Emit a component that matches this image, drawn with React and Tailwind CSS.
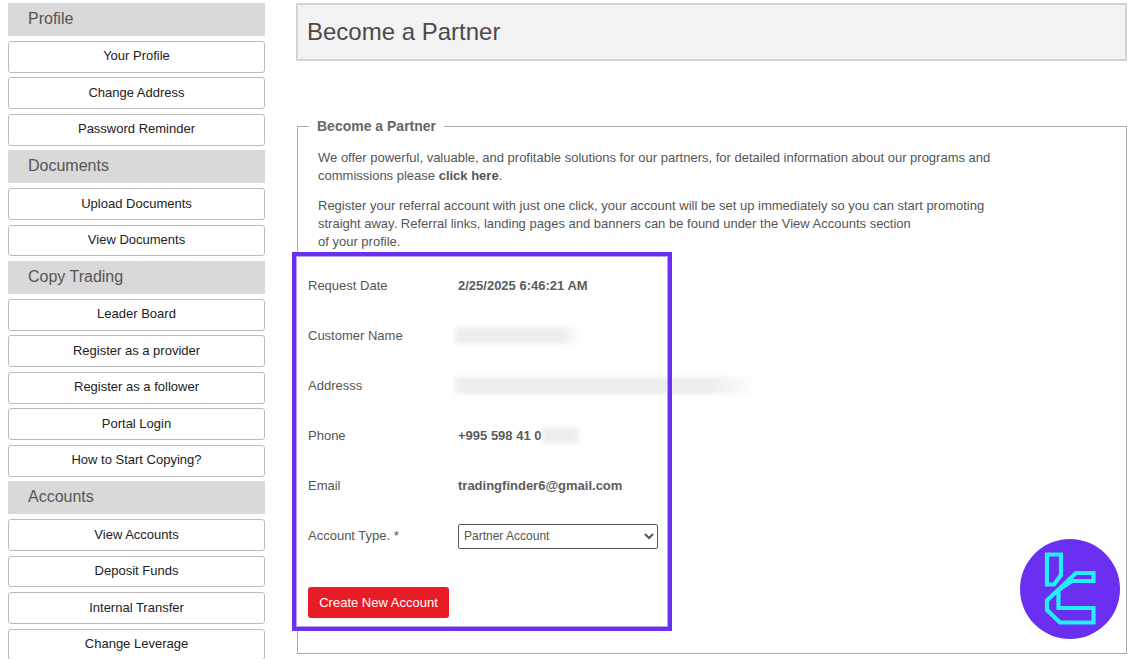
const sidebar = [
  { title: 'Profile', links: ['Your Profile', 'Change Address', 'Password Reminder'] },
  { title: 'Documents', links: ['Upload Documents', 'View Documents'] },
  { title: 'Copy Trading', links: ['Leader Board', 'Register as a provider', 'Register as a follower', 'Portal Login', 'How to Start Copying?'] },
  { title: 'Accounts', links: ['View Accounts', 'Deposit Funds', 'Internal Transfer', 'Change Leverage'] },
];

function Logo() {
  return (
    <svg viewBox="0 0 100 100" className="absolute left-[1020px] top-[539px] w-[100px] h-[100px]">
      <circle cx="50" cy="50" r="50" fill="#6a2ff0" />
      <g fill="none" stroke="#22eeff" strokeWidth="4.2">
        <path d="M27 15.5 H41 V36 L34 45.5 H27 Z" />
        <path d="M73.5 34 H56 L27 61.5 V71 L40 83.5 H73.5 V69 H38.5 V51 L52 42 H73.5 Z" />
      </g>
    </svg>
  );
}

function Row({ label, children }) {
  return (
    <div className="flex items-center h-[50px]">
      <div className="w-[150px] shrink-0">{label}</div>
      <div className="font-bold text-[#5c5c5c]">{children}</div>
    </div>
  );
}

function Smudge({ className }) {
  return <div className={`bg-gradient-to-r from-[#eeeeee] from-85% to-white blur-[2px] h-[17px] ${className}`} />;
}

export default function App() {
  return (
    <div className="relative w-[1140px] h-[659px] overflow-hidden bg-white text-[13px] text-[#555] font-['Liberation_Sans',Arial,sans-serif] flex">
      <aside className="w-[257px] ml-2 mt-[3px] shrink-0 flex flex-col gap-[4.72px]">
        {sidebar.map((group) => (
          <div key={group.title} className="contents">
            <div className="h-[33px] shrink-0 bg-[#d9d9d9] pl-5 text-[16px] leading-[31px] text-[#555]">{group.title}</div>
            {group.links.map((link) => (
              <a key={link} className="h-[31.8px] shrink-0 bg-white border border-[#bbb] rounded-[3px] flex items-center justify-center text-[#222] pb-px">
                {link}
              </a>
            ))}
          </div>
        ))}
      </aside>

      <main className="ml-[31px] w-[831px] pt-[3px]">
        <div className="h-[58px] bg-[#f3f3f3] border-2 border-[#d4d4d4] pl-[9px] flex items-center text-[24px] text-[#4a4a4a]">
          Become a Partner
        </div>

        <fieldset className="ml-[1px] mt-[55px] w-[830px] h-[538px] border border-[#aaa] pl-0">
          <legend className="ml-[11px] px-2 font-bold text-[14px] text-[#666]">Become a Partner</legend>
          <div className="ml-5 mt-[12px] whitespace-nowrap leading-[18.3px]">
            <p>
              We offer powerful, valuable, and profitable solutions for our partners, for detailed information about our programs and
              <br />
              commissions please <b>click here</b>.
            </p>
            <p className="mt-[11px]">
              Register your referral account with just one click, your account will be set up immediately so you can start promoting
              <br />
              straight away. Referral links, landing pages and banners can be found under the View Accounts section
              <br />
              of your profile.
            </p>
          </div>

          <div className="relative -ml-[6px] mt-px w-[380px] h-[379px] bg-white pt-[8px] pl-4">
            <div className="absolute inset-0 z-10 pointer-events-none border-4 border-[#6a2ff0] outline outline-1 -outline-offset-[5px] outline-[#b9a0f7]" />
            <Row label="Request Date">2/25/2025 6:46:21 AM</Row>
            <Row label="Customer Name">
              <Smudge className="w-[127px] -ml-[3px]" />
            </Row>
            <Row label="Addresss">
              <Smudge className="w-[302px] -ml-[3px]" />
            </Row>
            <Row label="Phone">
              <span className="flex items-center">
                +995 598 41 0
                <Smudge className="w-[38px] ml-px" />
              </span>
            </Row>
            <Row label="Email">tradingfinder6@gmail.com</Row>
            <Row label="Account Type. *">
              <select className="mt-[2px] w-[200px] h-[25px] border border-[#555] rounded-[2px] font-normal text-[12px] text-[#555] bg-white pl-[1px]" defaultValue="partner">
                <option value="partner">Partner Account</option>
              </select>
            </Row>
            <button className="mt-[27px] w-[141px] h-[31px] bg-[#e81c27] rounded-[3px] text-white text-[13px]">
              Create New Account
            </button>
          </div>
        </fieldset>
      </main>

      <Logo />
    </div>
  );
}
